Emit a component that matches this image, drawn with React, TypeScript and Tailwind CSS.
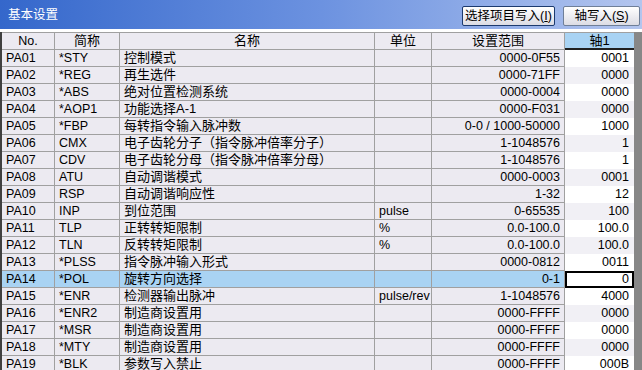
import React from 'react';

interface Param {
    no: string;
    abbr: string;
    name: string;
    unit: string;
    range: string;
    value: string;
}

const params: Param[] = [
    { no: 'PA01', abbr: '*STY', name: '控制模式', unit: '', range: '0000-0F55', value: '0001' },
    { no: 'PA02', abbr: '*REG', name: '再生选件', unit: '', range: '0000-71FF', value: '0000' },
    { no: 'PA03', abbr: '*ABS', name: '绝对位置检测系统', unit: '', range: '0000-0004', value: '0000' },
    { no: 'PA04', abbr: '*AOP1', name: '功能选择A-1', unit: '', range: '0000-F031', value: '0000' },
    { no: 'PA05', abbr: '*FBP', name: '每转指令输入脉冲数', unit: '', range: '0-0 / 1000-50000', value: '1000' },
    { no: 'PA06', abbr: 'CMX', name: '电子齿轮分子（指令脉冲倍率分子）', unit: '', range: '1-1048576', value: '1' },
    { no: 'PA07', abbr: 'CDV', name: '电子齿轮分母（指令脉冲倍率分母）', unit: '', range: '1-1048576', value: '1' },
    { no: 'PA08', abbr: 'ATU', name: '自动调谐模式', unit: '', range: '0000-0003', value: '0001' },
    { no: 'PA09', abbr: 'RSP', name: '自动调谐响应性', unit: '', range: '1-32', value: '12' },
    { no: 'PA10', abbr: 'INP', name: '到位范围', unit: 'pulse', range: '0-65535', value: '100' },
    { no: 'PA11', abbr: 'TLP', name: '正转转矩限制', unit: '%', range: '0.0-100.0', value: '100.0' },
    { no: 'PA12', abbr: 'TLN', name: '反转转矩限制', unit: '%', range: '0.0-100.0', value: '100.0' },
    { no: 'PA13', abbr: '*PLSS', name: '指令脉冲输入形式', unit: '', range: '0000-0812', value: '0011' },
    { no: 'PA14', abbr: '*POL', name: '旋转方向选择', unit: '', range: '0-1', value: '0' },
    { no: 'PA15', abbr: '*ENR', name: '检测器输出脉冲', unit: 'pulse/rev', range: '1-1048576', value: '4000' },
    { no: 'PA16', abbr: '*ENR2', name: '制造商设置用', unit: '', range: '0000-FFFF', value: '0000' },
    { no: 'PA17', abbr: '*MSR', name: '制造商设置用', unit: '', range: '0000-FFFF', value: '0000' },
    { no: 'PA18', abbr: '*MTY', name: '制造商设置用', unit: '', range: '0000-FFFF', value: '0000' },
    { no: 'PA19', abbr: '*BLK', name: '参数写入禁止', unit: '', range: '0000-FFFF', value: '000B' },
];

const font = "font-['Liberation_Sans','Noto_Sans_CJK_SC',sans-serif]";
const cell = 'h-full border-r border-[#a0a0a0] flex items-center px-[4px] overflow-hidden whitespace-nowrap';

const App: React.FC = () => {
    const selected = 'PA14';

    return (
        <div className={`w-[642px] h-[370px] overflow-hidden bg-white text-[12px] text-black ${font}`}>
            {/* Title bar */}
            <div className="h-[29px] flex items-center justify-between bg-gradient-to-r from-[#3467cb] via-[#6c92e0] to-[#b3c5ee] pl-[8px] pr-[2px]">
                <span className="text-white text-[12.5px] font-['Noto_Sans_CJK_SC',sans-serif]">基本设置</span>
                <div className="flex items-center gap-[8px] pt-[3px]">
                    <button className="h-[20px] w-[93px] rounded-[2px] border border-[#1c3a6e] bg-gradient-to-b from-white to-[#dcdce4] text-[12.5px] flex items-center justify-center">
                        选择项目写入(<span className="underline">I</span>)
                    </button>
                    <button className="h-[20px] w-[77px] rounded-[2px] border border-[#6f7f98] bg-gradient-to-b from-white to-[#dcdce4] text-[12.5px] flex items-center justify-center">
                        轴写入(<span className="underline">S</span>)
                    </button>
                </div>
            </div>
            <div className="h-[3px] bg-white" />

            {/* Table */}
            <div className="flex">
                <div className="w-[634px] border-l-2 border-[#404040]">
                    {/* Header */}
                    <div className="h-[18px] flex border-t border-[#a0a0a0] bg-[#eceaf1] text-[13px]">
                        <div className={`${cell} w-[53px] justify-center border-b text-[12.5px]`}>No.</div>
                        <div className={`${cell} w-[65px] justify-center border-b`}>简称</div>
                        <div className={`${cell} w-[255px] justify-center border-b`}>名称</div>
                        <div className={`${cell} w-[57px] justify-center border-b`}>单位</div>
                        <div className={`${cell} w-[133px] justify-center border-b`}>设置范围</div>
                        <div className="w-[69px] h-full flex items-center justify-center bg-[#a9d3f3] border-b-2 border-[#202020]">轴1</div>
                    </div>

                    {/* Rows */}
                    {params.map((p, i) => {
                        const isSel = p.no === selected;
                        const rowBg = isSel ? 'bg-[#a9d3f3]' : 'bg-[#eceaf1]';
                        return (
                            <div key={p.no} className={`h-[17px] flex ${rowBg} text-[12.5px]`}>
                                <div className={`${cell} w-[53px] border-b`}>{p.no}</div>
                                <div className={`${cell} w-[65px] border-b`}>{p.abbr}</div>
                                <div className={`${cell} w-[255px] border-b text-[13px]`}>{p.name}</div>
                                <div className={`${cell} w-[57px] border-b`}>{p.unit}</div>
                                <div className={`${cell} w-[133px] border-b justify-end whitespace-pre`}>{p.range}</div>
                                {isSel ? (
                                    <div className="w-[69px] h-full flex items-center justify-end px-[3px] bg-white border-2 border-black">
                                        {p.value}
                                    </div>
                                ) : (
                                    <div className={`w-[69px] h-full flex items-center justify-end px-[5px] ${i % 2 === 0 ? 'bg-white' : 'bg-[#f1f0f5]'}`}>
                                        {p.value}
                                    </div>
                                )}
                            </div>
                        );
                    })}
                </div>
                <div className="flex-1 bg-[#878787]" />
            </div>
        </div>
    );
};

export default App;
